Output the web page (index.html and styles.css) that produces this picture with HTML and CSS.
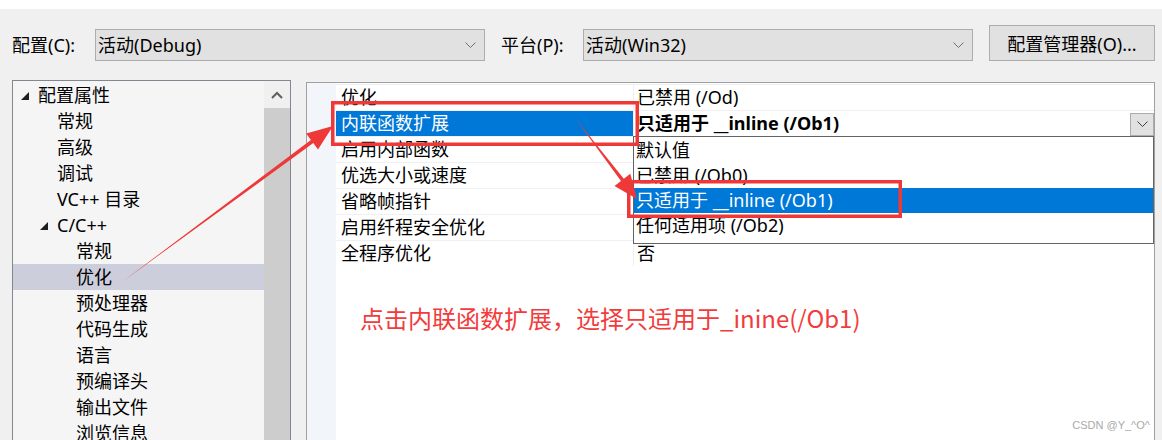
FILE: index.html
```html
<!DOCTYPE html>
<html lang="zh-CN">
<head>
  <meta charset="UTF-8">
  <title>属性页</title>
  <link rel="stylesheet" href="styles.css">
</head>
<body>

<div class="top-strip"></div>

<div class="toolbar">
  <span class="label label-config">配置(C):</span>
  <div class="combo">
    <span>活动(Debug)</span>
    <svg class="chev" width="11" height="7" viewBox="0 0 11 7"><polyline points="0.5,0.5 5.5,5.5 10.5,0.5" fill="none" stroke="#707070" stroke-width="1"/></svg>
  </div>
  <span class="label label-platform">平台(P):</span>
  <div class="combo">
    <span>活动(Win32)</span>
    <svg class="chev" width="11" height="7" viewBox="0 0 11 7"><polyline points="0.5,0.5 5.5,5.5 10.5,0.5" fill="none" stroke="#707070" stroke-width="1"/></svg>
  </div>
  <button class="btn">配置管理器(O)...</button>
</div>

<div class="main">
  <div class="tree">
    <div class="tree-list">
      <div class="node l0"><span class="twist"><svg width="9" height="9" viewBox="0 0 9 9"><polygon points="8,0 8,8 0,8" fill="#1e1e1e"/></svg></span>配置属性</div>
      <div class="node l1"><span class="twist"></span>常规</div>
      <div class="node l1"><span class="twist"></span>高级</div>
      <div class="node l1"><span class="twist"></span>调试</div>
      <div class="node l1"><span class="twist"></span>VC++ 目录</div>
      <div class="node l1"><span class="twist"><svg width="9" height="9" viewBox="0 0 9 9"><polygon points="8,0 8,8 0,8" fill="#1e1e1e"/></svg></span>C/C++</div>
      <div class="node l2"><span class="twist"></span>常规</div>
      <div class="node l2 current"><span class="twist"></span>优化</div>
      <div class="node l2"><span class="twist"></span>预处理器</div>
      <div class="node l2"><span class="twist"></span>代码生成</div>
      <div class="node l2"><span class="twist"></span>语言</div>
      <div class="node l2"><span class="twist"></span>预编译头</div>
      <div class="node l2"><span class="twist"></span>输出文件</div>
      <div class="node l2"><span class="twist"></span>浏览信息</div>
    </div>
    <div class="scrollbar">
      <div class="sb-up">
        <svg width="12" height="8" viewBox="0 0 12 8"><polyline points="1,7 6,2 11,7" fill="none" stroke="#606060" stroke-width="2"/></svg>
      </div>
      <div class="sb-thumb"></div>
    </div>
  </div>

  <div class="grid">
    <div class="gutter"></div>
    <div class="rows">
      <div class="row"><div class="name">优化</div><div class="value">已禁用 (/Od)</div></div>
      <div class="row selected">
        <div class="name">内联函数扩展</div>
        <div class="value">
          <b>只适用于 __inline (/Ob1)</b>
          <span class="drop-btn"><svg width="11" height="7" viewBox="0 0 11 7"><polyline points="0.5,0.5 5.5,5.5 10.5,0.5" fill="none" stroke="#404040" stroke-width="1"/></svg></span>
        </div>
      </div>
      <div class="row"><div class="name">启用内部函数</div><div class="value"></div></div>
      <div class="row"><div class="name">优选大小或速度</div><div class="value"></div></div>
      <div class="row"><div class="name">省略帧指针</div><div class="value"></div></div>
      <div class="row"><div class="name">启用纤程安全优化</div><div class="value"></div></div>
      <div class="row"><div class="name">全程序优化</div><div class="value">否</div></div>

      <p class="note">点击内联函数扩展，选择只适用于_inine(/Ob1)</p>
    </div>

    <ul class="dropdown">
      <li>默认值</li>
      <li>已禁用 (/Ob0)</li>
      <li class="active">只适用于 __inline (/Ob1)</li>
      <li>任何适用项 (/Ob2)</li>
    </ul>
  </div>
</div>

<svg class="annot" width="1162" height="440" viewBox="0 0 1162 440">
  <rect x="332.75" y="102.75" width="304.5" height="41.5" fill="none" stroke="#ef3838" stroke-width="3.5"/>
  <rect x="628.75" y="181.75" width="271.5" height="34.5" fill="none" stroke="#ef3838" stroke-width="3.5"/>
  <!-- arrow from 优化 to the property name -->
  <polygon points="122,282 310.9,139.9 306.2,133.5 333,126 318,149.5 313.3,143.1" fill="#ef3838"/>
  <!-- arrow from the name to the option -->
  <polygon points="575,118 623.8,178.8 630.3,173.8 637,199 614.5,186 621,181" fill="#ef3838"/>
</svg>

<div class="watermark">CSDN @Y_^O^</div>

</body>
</html>
```

FILE: styles.css
```css
body {
    margin: 0;
    width: 1162px;
    height: 440px;
    overflow: hidden;
    position: relative;
    background-color: #f0f0f0;
    font-family: "Noto Sans", "Noto Sans CJK SC", sans-serif;
    font-size: 18px;
    color: #000;
}
.top-strip {
    height: 9px;
    background-color: #fff;
}
.toolbar {
    display: flex;
    align-items: flex-start;
    height: 71px;
    box-sizing: border-box;
    padding: 16px 0 0 12px;
}
.label {
    margin-top: 4px;
    line-height: 32px;
}
.label-config {
    width: 83px;
}
.label-platform {
    width: 82px;
    margin-left: 16px;
}
.combo {
    margin-top: 4px;
    width: 390px;
    height: 32px;
    box-sizing: border-box;
    border: 1px solid #adadad;
    background-color: #e1e1e1;
    display: flex;
    align-items: center;
    justify-content: space-between;
    padding: 0 8px 0 2px;
    line-height: 30px;
}
.chev {
    display: block;
}
.btn {
    margin-left: 16px;
    width: 166px;
    height: 36px;
    border: 1px solid #adadad;
    background-color: #e1e1e1;
    font: inherit;
    color: #000;
    padding: 0;
}
.main {
    display: flex;
    gap: 15px;
    padding-left: 12px;
    height: 360px;
}
.tree {
    width: 279px;
    box-sizing: border-box;
    border: 1px solid #828790;
    border-bottom: none;
    background-color: #f5f5f5;
    display: flex;
    overflow: hidden;
}
.tree-list {
    flex: 1;
    padding-top: 1px;
}
.node {
    height: 26px;
    line-height: 26px;
    display: flex;
    align-items: center;
    white-space: nowrap;
}
.node.l0 { padding-left: 6px; }
.node.l1 { padding-left: 25px; }
.node.l2 { padding-left: 44px; }
.node.current {
    background-color: #cccedb;
}
.twist {
    width: 19px;
    flex: none;
    display: flex;
    align-items: center;
    padding-left: 2px;
    box-sizing: border-box;
}
.twist svg {
    display: block;
    margin-top: 2px;
}
.scrollbar {
    width: 26px;
    flex: none;
    display: flex;
    flex-direction: column;
}
.sb-up {
    height: 27px;
    background-color: #f0f0f0;
    display: flex;
    justify-content: center;
    align-items: center;
}
.sb-thumb {
    flex: 1;
    background-color: #cdcdcd;
}
.grid {
    position: relative;
    margin-top: 2px;
    width: 849px;
    box-sizing: border-box;
    border: 1px solid #a0a0a0;
    border-bottom: none;
    background-color: #fff;
    display: flex;
}
.gutter {
    width: 29px;
    flex: none;
    background-color: #f2f5fa;
}
.rows {
    flex: 1;
    padding-top: 1px;
}
.row {
    display: flex;
    height: 26px;
    box-sizing: border-box;
    border-top: 1px solid #eef0f4;
    line-height: 25px;
}
.name {
    width: 298px;
    padding-left: 5px;
    box-sizing: border-box;
    border-right: 1px solid #eef0f4;
}
.value {
    flex: 1;
    padding-left: 3px;
    display: flex;
    justify-content: space-between;
    align-items: center;
}
.row.selected .name {
    background-color: #0078d7;
    color: #fff;
}
.drop-btn {
    width: 24px;
    height: 23px;
    box-sizing: border-box;
    border: 1px solid #adadad;
    background-color: #e1e1e1;
    display: flex;
    justify-content: center;
    align-items: center;
    margin-top: 1px;
}
.dropdown {
    position: absolute;
    left: 326px;
    right: 0;
    top: 53px;
    margin: 0;
    padding: 1px 0 5px;
    list-style: none;
    border: 1px solid #646464;
    background-color: #fff;
}
.dropdown li {
    height: 25px;
    line-height: 25px;
    padding-left: 2px;
}
.dropdown li.active {
    background-color: #0078d7;
    color: #fff;
}
.note {
    margin: 36px 0 0 24px;
    font-family: "Noto Sans CJK SC", sans-serif;
    font-size: 24px;
    line-height: 32px;
    color: #f23c3c;
}
.annot {
    position: absolute;
    left: 0;
    top: 0;
    pointer-events: none;
}
.watermark {
    position: absolute;
    right: 12px;
    bottom: 9px;
    font-family: "Liberation Sans", sans-serif;
    font-size: 11px;
    color: #a9a9a9;
}
```
